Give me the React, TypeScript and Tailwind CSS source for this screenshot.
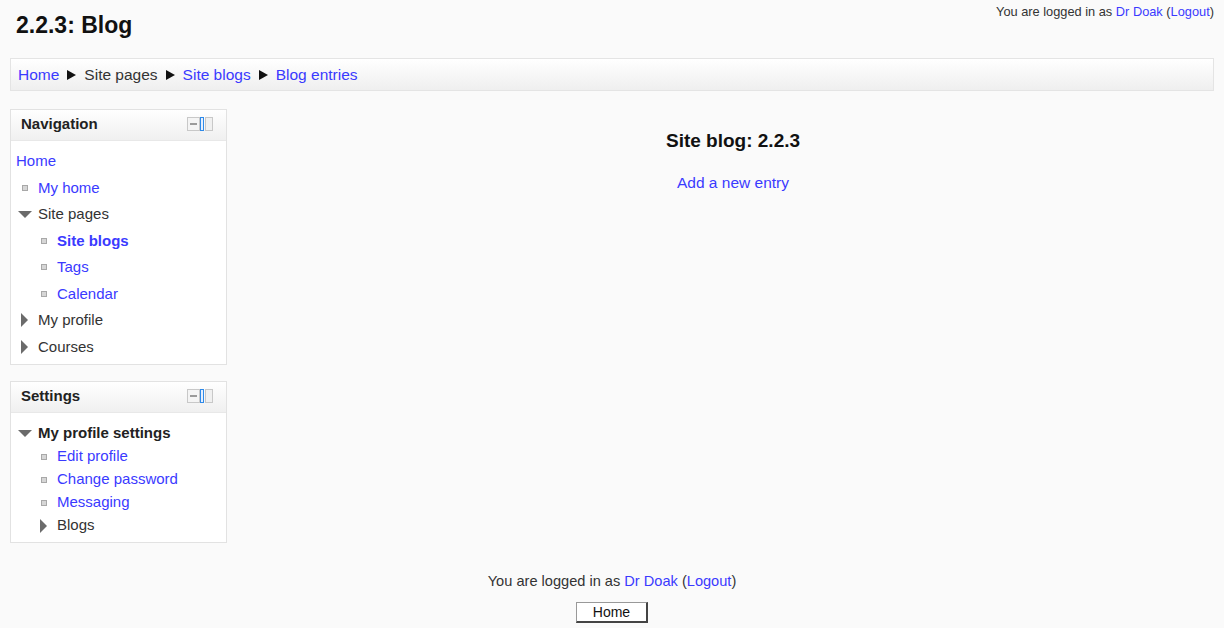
import React from "react"

const link = "text-[#3a3aff]"

function Dock() {
	return (
		<svg width="27" height="15" viewBox="0 0 27 15" className="block">
			<rect x="0.5" y="0.5" width="12" height="13" fill="#f4f4f4" stroke="#c8c8c8" />
			<rect x="3" y="6" width="7" height="2" fill="#9a9a9a" />
			<rect x="13.5" y="0.5" width="3" height="13" fill="#e6f0ff" stroke="#2f8ae8" />
			<rect x="18.5" y="0.5" width="7" height="13" fill="#f0f0f0" stroke="#c8c8c8" />
		</svg>
	)
}

function Bullet() {
	return <span className="inline-block h-[6px] w-[6px] border border-[#a8a8a8] bg-[#d6d6d6]" />
}

function Down() {
	return (
		<svg width="14" height="7" viewBox="0 0 14 7" className="block">
			<path d="M0 0 L14 0 L7 7 Z" fill="#6b6b6b" />
		</svg>
	)
}

function Right() {
	return (
		<svg width="7" height="14" viewBox="0 0 7 14" className="block">
			<path d="M0 0 L7 7 L0 14 Z" fill="#6b6b6b" />
		</svg>
	)
}

function Sep() {
	return (
		<svg width="9" height="10" viewBox="0 0 9 10" className="mx-[8px] block">
			<path d="M0 0 L9 5 L0 10 Z" fill="#111" />
		</svg>
	)
}

function Row({ indent, icon, children, h }: { indent: number; icon: React.ReactNode; children: React.ReactNode; h: string }) {
	return (
		<div className={`flex items-center ${h}`} style={{ paddingLeft: indent }}>
			<span className="flex w-[27px] shrink-0 items-center justify-center">{icon}</span>
			<span>{children}</span>
		</div>
	)
}

function Block({ title, children }: { title: string; children: React.ReactNode }) {
	return (
		<div className="border border-[#e2e2e2] bg-white">
			<div className="flex h-[31px] items-center justify-between border-b border-[#e8e8e8] bg-gradient-to-b from-white to-[#f0f0f0] pb-[1px] pl-[10px] pr-[12px]">
				<span className="font-bold text-[#222]">{title}</span>
				<Dock />
			</div>
			{children}
		</div>
	)
}

export default function App() {
	return (
		<div className="flex min-h-screen flex-col bg-[#fafafa] px-[10px] font-['Liberation_Sans',Arial,sans-serif] text-[15px] text-[#333]">
			<div className="flex justify-between">
				<h1 className="pl-[6px] pt-[10px] text-[23px] font-bold leading-[30px] text-[#111]">2.2.3: Blog</h1>
				<div className="pt-[4px] text-[12.8px] leading-[16px]">
					You are logged in as <span className={link}>Dr Doak</span> (<span className={link}>Logout</span>)
				</div>
			</div>

			<div className="mt-[18px] flex h-[33px] items-center border border-[#e4e4e4] bg-gradient-to-b from-white to-[#efefef] pl-[7px] pt-[1px] text-[15.5px]">
				<span className={link}>Home</span>
				<Sep />
				<span>Site pages</span>
				<Sep />
				<span className={link}>Site blogs</span>
				<Sep />
				<span className={link}>Blog entries</span>
			</div>

			<div className="mt-[18px] flex">
				<div className="flex w-[217px] shrink-0 flex-col gap-[16px]">
					<Block title="Navigation">
						<div className="pb-[4px] pt-[7px]">
							<div className={`h-[26.5px] pl-[5px] leading-[26px] ${link}`}>Home</div>
							<Row indent={0} icon={<Bullet />} h="h-[26.5px]">
								<span className={link}>My home</span>
							</Row>
							<Row indent={0} icon={<Down />} h="h-[26.5px]">
								Site pages
							</Row>
							<Row indent={19} icon={<Bullet />} h="h-[26.5px]">
								<span className={`font-bold ${link}`}>Site blogs</span>
							</Row>
							<Row indent={19} icon={<Bullet />} h="h-[26.5px]">
								<span className={link}>Tags</span>
							</Row>
							<Row indent={19} icon={<Bullet />} h="h-[26.5px]">
								<span className={link}>Calendar</span>
							</Row>
							<Row indent={0} icon={<Right />} h="h-[26.5px]">
								My profile
							</Row>
							<Row indent={0} icon={<Right />} h="h-[26.5px]">
								Courses
							</Row>
						</div>
					</Block>
					<Block title="Settings">
						<div className="pb-[5px] pt-[9px]">
							<Row indent={0} icon={<Down />} h="h-[23px]">
								<span className="font-bold text-[#222]">My profile settings</span>
							</Row>
							<Row indent={19} icon={<Bullet />} h="h-[23px]">
								<span className={link}>Edit profile</span>
							</Row>
							<Row indent={19} icon={<Bullet />} h="h-[23px]">
								<span className={link}>Change password</span>
							</Row>
							<Row indent={19} icon={<Bullet />} h="h-[23px]">
								<span className={link}>Messaging</span>
							</Row>
							<Row indent={19} icon={<Right />} h="h-[23px]">
								Blogs
							</Row>
						</div>
					</Block>
				</div>

				<div className="flex flex-1 flex-col items-center pl-[25px] pt-[20px]">
					<h2 className="text-[19px] font-bold leading-[24px] text-[#111]">Site blog: 2.2.3</h2>
					<div className={`mt-[18px] text-[15.5px] ${link}`}>Add a new entry</div>
				</div>
			</div>

			<div className="mt-[29px] flex flex-col items-center">
				<div className="text-[14.6px] leading-[18px]">
					You are logged in as <span className={link}>Dr Doak</span> (<span className={link}>Logout</span>)
				</div>
				<button className="mt-[12px] h-[21px] w-[72px] border border-b-2 border-r-2 border-[#999] border-b-[#444] border-r-[#444] bg-white text-[14px] leading-[16px] text-[#111]">
					Home
				</button>
			</div>
		</div>
	)
}
